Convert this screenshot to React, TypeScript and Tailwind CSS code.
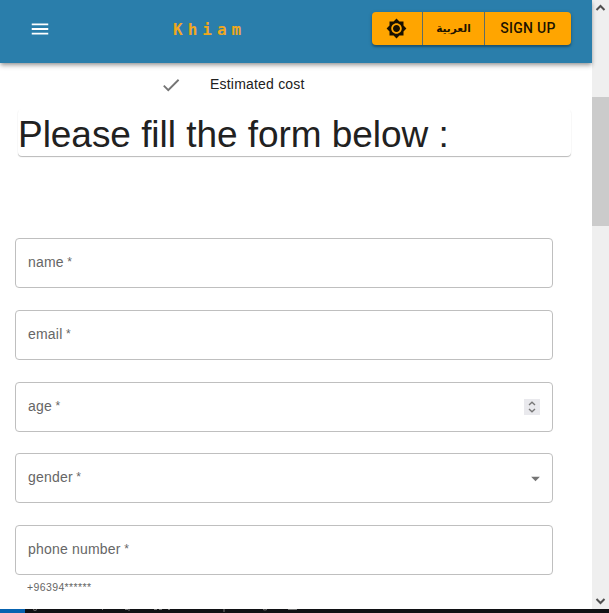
import type { ReactNode } from "react";

function Icon({ d, className }: { d: string; className: string }) {
  return (
    <svg viewBox="0 0 24 24" fill="currentColor" className={className}>
      <path d={d} />
    </svg>
  );
}

const MENU = "M3 18h18v-2H3v2zm0-5h18v-2H3v2zm0-7v2h18V6H3z";
const SUN =
  "M20 8.69V4h-4.69L12 .69 8.69 4H4v4.69L.69 12 4 15.31V20h4.69L12 23.31 15.31 20H20v-4.69L23.31 12 20 8.69zM12 18c-3.31 0-6-2.69-6-6s2.69-6 6-6 6 2.69 6 6-2.69 6-6 6zm0-10c-2.21 0-4 1.79-4 4s1.79 4 4 4 4-1.79 4-4-1.79-4-4-4z";
const CHECK = "M9 16.17 4.83 12l-1.42 1.41L9 19 21 7l-1.41-1.41z";
const DROP = "m7 10 5 5 5-5z";

function Header() {
  return (
    <header className="relative z-10 flex h-[63px] shrink-0 items-start bg-[#2a7eab] shadow-[0_2px_4px_-1px_rgba(0,0,0,0.3),0_3px_5px_rgba(0,0,0,0.2)]">
      <button className="mt-[18px] ml-[29px] text-white">
        <Icon d={MENU} className="block size-[22px]" />
      </button>
      <div className="mt-[18px] ml-[122px] w-[199px] font-['DejaVu_Sans_Mono',monospace] text-[16px] leading-6 font-bold tracking-[5px] text-[#f0a81e]">
        Khiam
      </div>
      <div className="mt-3 flex h-[33px] w-[199px] overflow-hidden rounded-[4px] bg-[#ffa500] text-black/90 shadow-[0_2px_2px_rgba(0,0,0,0.25),0_1px_4px_rgba(0,0,0,0.18)]">
        <button className="flex w-[51px] items-center justify-center border-r border-[#5d6d68] pr-px">
          <Icon d={SUN} className="size-[21px]" />
        </button>
        <button
          lang="ar"
          className="flex w-[62px] items-center justify-center border-r border-[#5d6d68] pt-px font-['DejaVu_Sans',sans-serif] text-[10.5px] font-bold"
        >
          العربية
        </button>
        <button className="flex flex-1 items-center justify-center font-[Roboto,sans-serif] text-[14px] font-medium tracking-[0.32px] whitespace-nowrap">
          SIGN UP
        </button>
      </div>
    </header>
  );
}

function Field({ label, children }: { label: string; children?: ReactNode }) {
  return (
    <div className="flex h-[50px] w-[538px] shrink-0 items-center justify-between rounded-[4px] border border-[#bfbfbf] pr-3 pl-3 text-[14px] tracking-[0.2px] text-[#666]">
      <span className="pb-[2px]">
        {label}
        <span className="ml-[3.5px] inline-block -translate-y-px text-[12px]">*</span>
      </span>
      {children}
    </div>
  );
}

function Scrollbar() {
  return (
    <aside className="flex w-[17px] shrink-0 flex-col items-center bg-[#efefef] text-[#505050]">
      <svg viewBox="0 0 17 17" className="size-[17px]" fill="none" stroke="currentColor" strokeWidth="2">
        <path d="m4.5 10 4-4 4 4" />
      </svg>
      <div className="mt-20 h-[129px] w-full bg-[#cbcbcb]" />
      <svg viewBox="0 0 17 17" className="mt-auto size-[17px]" fill="none" stroke="currentColor" strokeWidth="2">
        <path d="m4.5 7 4 4 4-4" />
      </svg>
    </aside>
  );
}

function Taskbar() {
  return (
    <footer className="flex h-1 shrink-0 bg-[#101114]">
      <div className="h-full w-[25px] bg-[#0863b0]" />
      <svg viewBox="0 0 584 4" className="h-1 w-[584px]" fill="none" stroke="#777" strokeWidth="1">
        <path d="M8 .5q2 2 4 0M77 .5h1M100 .5h3M104 0v2M129 .5h3M134 .5h3M143 .5h2M199 0v3M238 .5q2 1 4 0M263 .5h9" />
      </svg>
    </footer>
  );
}

export default function App() {
  return (
    <div className="flex h-[613px] w-[609px] flex-col overflow-hidden bg-white font-['Liberation_Sans',Arial,sans-serif]">
      <div className="flex min-h-0 flex-1">
        <main className="flex w-[592px] shrink-0 flex-col">
          <Header />
          <div className="flex h-[46px] shrink-0 items-start pt-[11px] pl-[160px] text-[14px] leading-5 tracking-[0.2px] text-[#212121]">
            <Icon d={CHECK} className="size-[22px] text-[#757575]" />
            <span className="ml-7">Estimated cost</span>
          </div>
          <h1 className="ml-[18px] h-[47px] w-[553px] shrink-0 rounded-[4px] text-[37px] leading-[51px] tracking-[-0.04px] whitespace-nowrap text-[#212121] shadow-[0_1px_1px_rgba(0,0,0,0.28)]">
            Please fill the form below :
          </h1>
          <form className="mt-[82px] ml-[15px] flex flex-col">
            <Field label="name" />
            <div className="h-[22px]" />
            <Field label="email" />
            <div className="h-[22px]" />
            <Field label="age">
              <span className="flex size-4 items-center justify-center bg-[#e9e9ed] text-[#777]">
                <svg viewBox="0 0 16 16" className="size-4" fill="none" stroke="currentColor" strokeWidth="1.4">
                  <path d="m5 6 3-2.7L11 6M5 10l3 2.7L11 10" />
                </svg>
              </span>
            </Field>
            <div className="h-[21px]" />
            <Field label="gender">
              <Icon d={DROP} className="-mr-[6px] size-[21px] text-[#757575]" />
            </Field>
            <div className="h-[22px]" />
            <Field label="phone number" />
            <p className="mt-1 ml-3 text-[10.5px] leading-4 tracking-[0.38px] text-[#666]">+96394******</p>
          </form>
        </main>
        <Scrollbar />
      </div>
      <Taskbar />
    </div>
  );
}
